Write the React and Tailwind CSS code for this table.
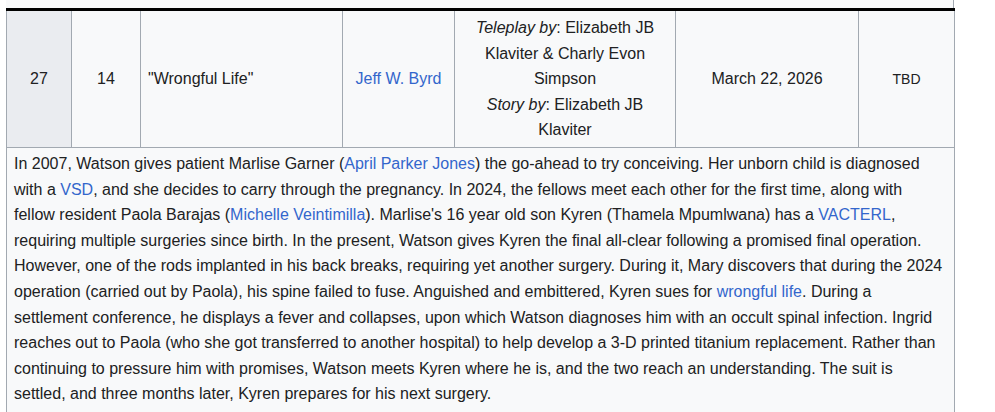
import React from "react";

const Link = ({ children }) => <a className="text-[#3366cc] no-underline">{children}</a>;

const episode = {
  overall: 27,
  season: 14,
  title: "Wrongful Life",
  director: "Jeff W. Byrd",
  airDate: "March 22, 2026",
  viewers: "TBD",
};

const App = () => {
  return (
    <div className="bg-white min-h-screen pl-[6px] text-[16px] leading-[1.6] text-[#202122] font-['Liberation_Sans',Arial,sans-serif]">
      {/* tail of previous summary row */}
      <div className="w-[948px] h-[8px] bg-[#f8f9fa] border-r border-[#a2a9b1]" />

      <table className="w-[948px] table-fixed border-collapse bg-[#f8f9fa] border-t-[3px] border-t-black">
        <colgroup>
          <col className="w-[65px]" />
          <col className="w-[69px]" />
          <col className="w-[202px]" />
          <col className="w-[112px]" />
          <col className="w-[221px]" />
          <col className="w-[183px]" />
          <col className="w-[96px]" />
        </colgroup>
        <tbody>
          <tr className="text-center align-middle">
            <th className="font-normal bg-[#eaecf0] border border-[#a2a9b1] border-t-0 px-[6px] py-[4px]">
              {episode.overall}
            </th>
            <td className="border border-[#a2a9b1] border-t-0 px-[6px] py-[4px]">{episode.season}</td>
            <td className="border border-[#a2a9b1] border-t-0 px-[7px] py-[4px] text-left">
              "{episode.title}"
            </td>
            <td className="border border-[#a2a9b1] border-t-0 px-[6px] py-[4px]">
              <Link>{episode.director}</Link>
            </td>
            <td className="border border-[#a2a9b1] border-t-0 px-[6px] py-[4px]">
              <i>Teleplay by</i>: Elizabeth JB Klaviter &amp; Charly Evon Simpson
              <br />
              <i>Story by</i>: Elizabeth JB Klaviter
            </td>
            <td className="border border-[#a2a9b1] border-t-0 px-[6px] py-[4px]">{episode.airDate}</td>
            <td className="border border-[#a2a9b1] border-t-0 px-[6px] py-[4px] text-[14px]">{episode.viewers}</td>
          </tr>
          <tr>
            <td colSpan={7} className="border border-[#a2a9b1] px-[7px] pt-[3px] pb-[10px] text-left">
              In 2007, Watson gives patient Marlise Garner (<Link>April Parker Jones</Link>) the go-ahead to try
              conceiving. Her unborn child is diagnosed with a <Link>VSD</Link>, and she decides to carry through
              the pregnancy. In 2024, the fellows meet each other for the first time, along with fellow resident
              Paola Barajas (<Link>Michelle Veintimilla</Link>). Marlise's 16 year old son Kyren (Thamela
              Mpumlwana) has a <Link>VACTERL</Link>, requiring multiple surgeries since birth. In the present,
              Watson gives Kyren the final all-clear following a promised final operation. However, one of the
              rods implanted in his back breaks, requiring yet another surgery. During it, Mary discovers that
              during the 2024 operation (carried out by Paola), his spine failed to fuse. Anguished and
              embittered, Kyren sues for <Link>wrongful life</Link>. During a settlement conference, he displays
              a fever and collapses, upon which Watson diagnoses him with an occult spinal infection. Ingrid
              reaches out to Paola (who she got transferred to another hospital) to help develop a 3-D printed
              titanium replacement. Rather than continuing to pressure him with promises, Watson meets Kyren
              where he is, and the two reach an understanding. The suit is settled, and three months later,
              Kyren prepares for his next surgery.
            </td>
          </tr>
        </tbody>
      </table>
    </div>
  );
};

export default App;
